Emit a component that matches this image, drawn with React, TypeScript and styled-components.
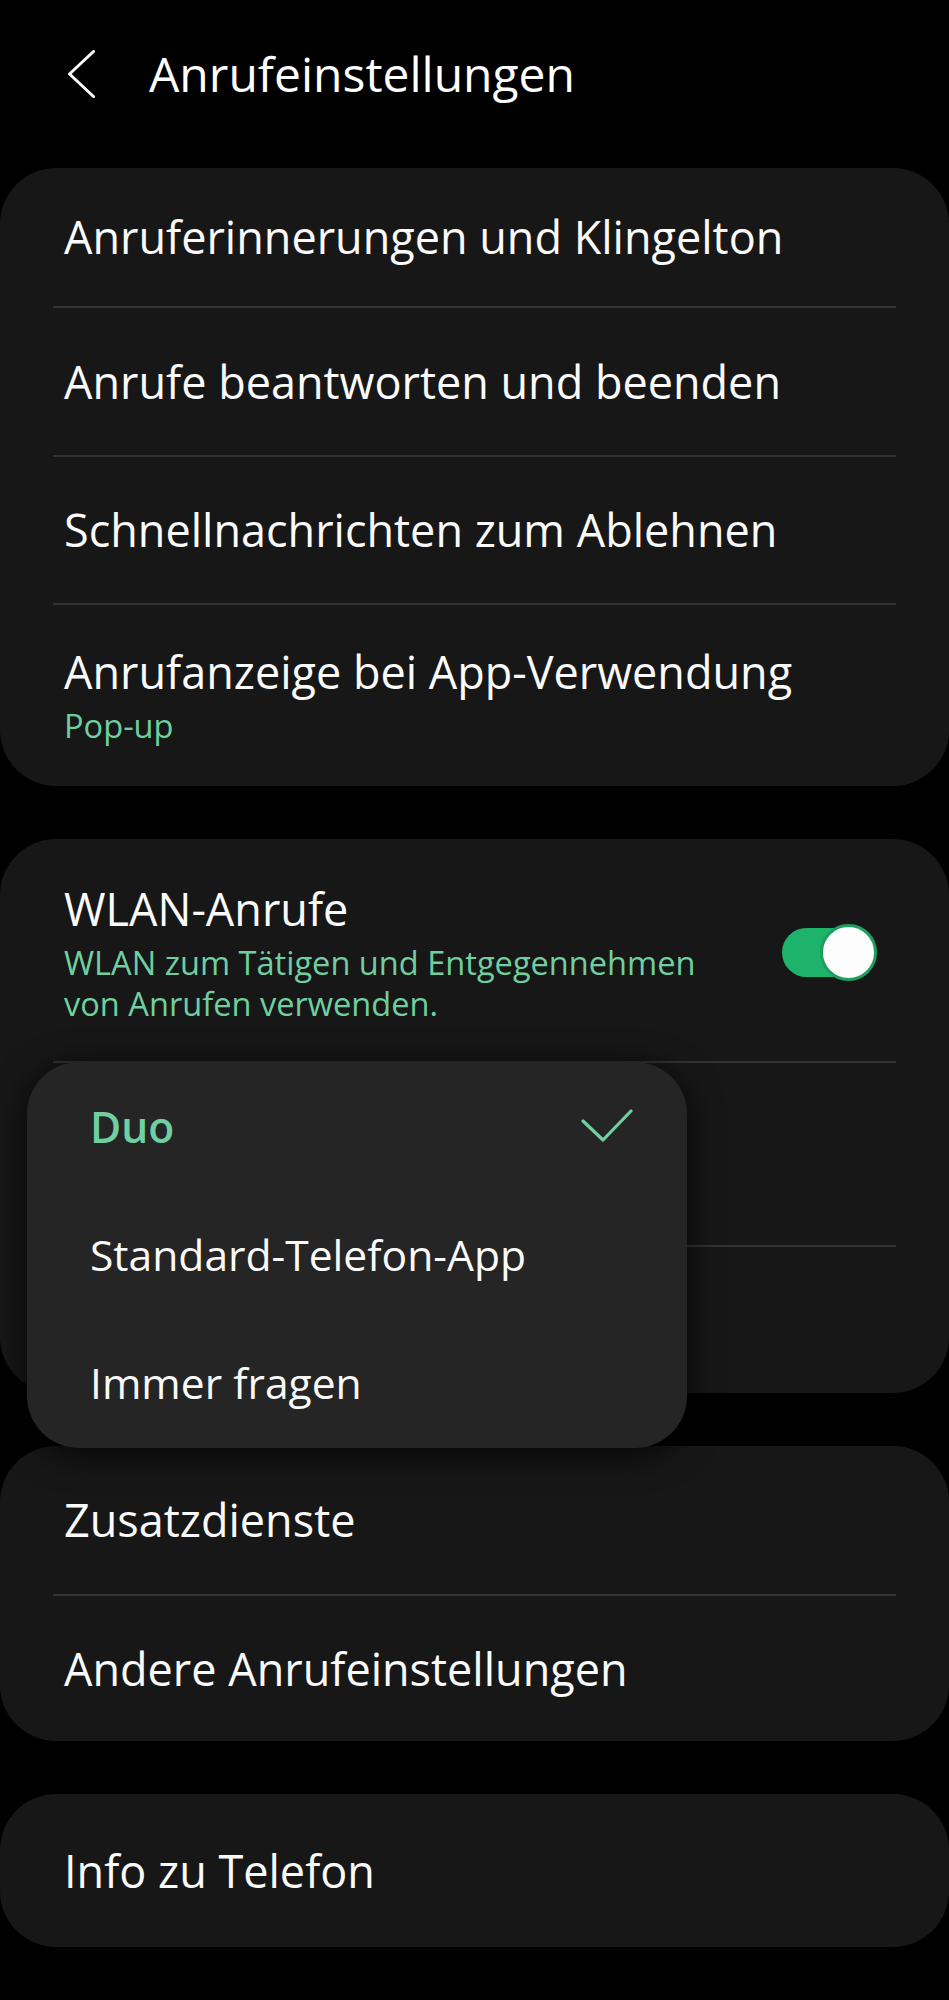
import React from "react";
import styled, { createGlobalStyle } from "styled-components";

const GlobalStyle = createGlobalStyle`
  html, body {
    margin: 0;
    padding: 0;
    background: #000;
  }
  body {
    font-family: "Open Sans", "Noto Sans", Arial, sans-serif;
    -webkit-font-smoothing: antialiased;
  }
`;

const GREEN = "#6fcfa0";

const Page = styled.div`
  position: relative;
  width: 949px;
  min-height: 2000px;
  background: #000;
  color: #fafafa;
  box-sizing: border-box;
`;

const Header = styled.header`
  height: 168px;
  box-sizing: border-box;
  padding: 50px 0 0 68px;
  display: flex;
  align-items: flex-start;
  gap: 54px;
`;

const BackIcon = styled.svg`
  width: 27px;
  height: 48px;
  flex: none;
`;

const Title = styled.h1`
  margin: 0;
  font-size: 48px;
  line-height: 48px;
  font-weight: 400;
  color: #fff;
`;

const CardList = styled.div`
  display: flex;
  flex-direction: column;
  gap: 53px;
`;

const Card = styled.section`
  background: #171717;
  border-radius: 56px;
  overflow: hidden;
`;

const Row = styled.div<{ $h: number; $pr?: number; $pt?: number }>`
  height: ${(p) => p.$h}px;
  box-sizing: border-box;
  padding: ${(p) => p.$pt ?? 0}px ${(p) => p.$pr ?? 64}px 0 64px;
  display: flex;
  align-items: center;
  justify-content: space-between;
`;

const TextBlock = styled.div`
  display: flex;
  flex-direction: column;
`;

const RowTitle = styled.div`
  font-size: 45px;
  line-height: 54px;
  font-weight: 400;
  color: #fafafa;
  white-space: nowrap;
`;

const RowSub = styled.div`
  font-size: 32.6px;
  line-height: 41px;
  color: ${GREEN};
  margin-top: 6px;
`;

const Divider = styled.div`
  height: 2px;
  margin: 0 53px;
  background: #333333;
`;

const ToggleWrap = styled.div`
  position: relative;
  width: 95px;
  height: 57px;
  flex: none;
`;

const Track = styled.div`
  position: absolute;
  left: 0;
  top: 4px;
  width: 88px;
  height: 49px;
  border-radius: 25px;
  background: #1db36a;
`;

const Thumb = styled.div`
  position: absolute;
  right: 0;
  top: 0;
  width: 57px;
  height: 57px;
  box-sizing: border-box;
  border-radius: 50%;
  background: #fdfdfd;
  border: 3px solid #1f9e60;
`;

const Popup = styled.div`
  position: absolute;
  left: 27px;
  top: 1062px;
  width: 660px;
  height: 386px;
  background: #252525;
  border-radius: 52px;
  box-shadow: 0 6px 34px rgba(0, 0, 0, 0.75);
  display: flex;
  flex-direction: column;
  overflow: hidden;
`;

const Option = styled.div<{ $selected?: boolean }>`
  height: 128px;
  flex: none;
  box-sizing: border-box;
  padding: 0 54px 0 63px;
  display: flex;
  align-items: center;
  justify-content: space-between;
  font-size: 42.6px;
  font-weight: ${(p) => (p.$selected ? 600 : 400)};
  color: ${(p) => (p.$selected ? GREEN : "#fafafa")};
`;

const CheckIcon = styled.svg`
  width: 52px;
  height: 34px;
  flex: none;
`;

export default function App() {
  return (
    <>
      <GlobalStyle />
      <Page>
        <Header>
          <BackIcon viewBox="0 0 27 48">
            <polyline
              points="25.5,1.5 1.5,24 25.5,46.5"
              fill="none"
              stroke="#fafafa"
              strokeWidth="3"
              strokeLinecap="round"
              strokeLinejoin="round"
            />
          </BackIcon>
          <Title>Anrufeinstellungen</Title>
        </Header>

        <CardList>
          <Card>
            <Row $h={138}>
              <RowTitle>Anruferinnerungen und Klingelton</RowTitle>
            </Row>
            <Divider />
            <Row $h={147}>
              <RowTitle>Anrufe beantworten und beenden</RowTitle>
            </Row>
            <Divider />
            <Row $h={146}>
              <RowTitle>Schnellnachrichten zum Ablehnen</RowTitle>
            </Row>
            <Divider />
            <Row $h={181}>
              <TextBlock>
                <RowTitle>Anrufanzeige bei App-Verwendung</RowTitle>
                <RowSub>Pop-up</RowSub>
              </TextBlock>
            </Row>
          </Card>

          <Card>
            <Row $h={222} $pr={72} $pt={5}>
              <TextBlock>
                <RowTitle>WLAN-Anrufe</RowTitle>
                <RowSub>
                  WLAN zum Tätigen und Entgegennehmen
                  <br />
                  von Anrufen verwenden.
                </RowSub>
              </TextBlock>
              <ToggleWrap>
                <Track />
                <Thumb />
              </ToggleWrap>
            </Row>
            <Divider />
            <Row $h={182} />
            <Divider />
            <Row $h={146} />
          </Card>

          <Card>
            <Row $h={148}>
              <RowTitle>Zusatzdienste</RowTitle>
            </Row>
            <Divider />
            <Row $h={145}>
              <RowTitle>Andere Anrufeinstellungen</RowTitle>
            </Row>
          </Card>

          <Card>
            <Row $h={153}>
              <RowTitle>Info zu Telefon</RowTitle>
            </Row>
          </Card>
        </CardList>

        <Popup>
          <Option $selected>
            <span>Duo</span>
            <CheckIcon viewBox="0 0 52 34">
              <polyline
                points="2,12 22,31 50,2"
                fill="none"
                stroke={GREEN}
                strokeWidth="3.2"
                strokeLinecap="round"
                strokeLinejoin="round"
              />
            </CheckIcon>
          </Option>
          <Option>Standard-Telefon-App</Option>
          <Option>Immer fragen</Option>
        </Popup>
      </Page>
    </>
  );
}
